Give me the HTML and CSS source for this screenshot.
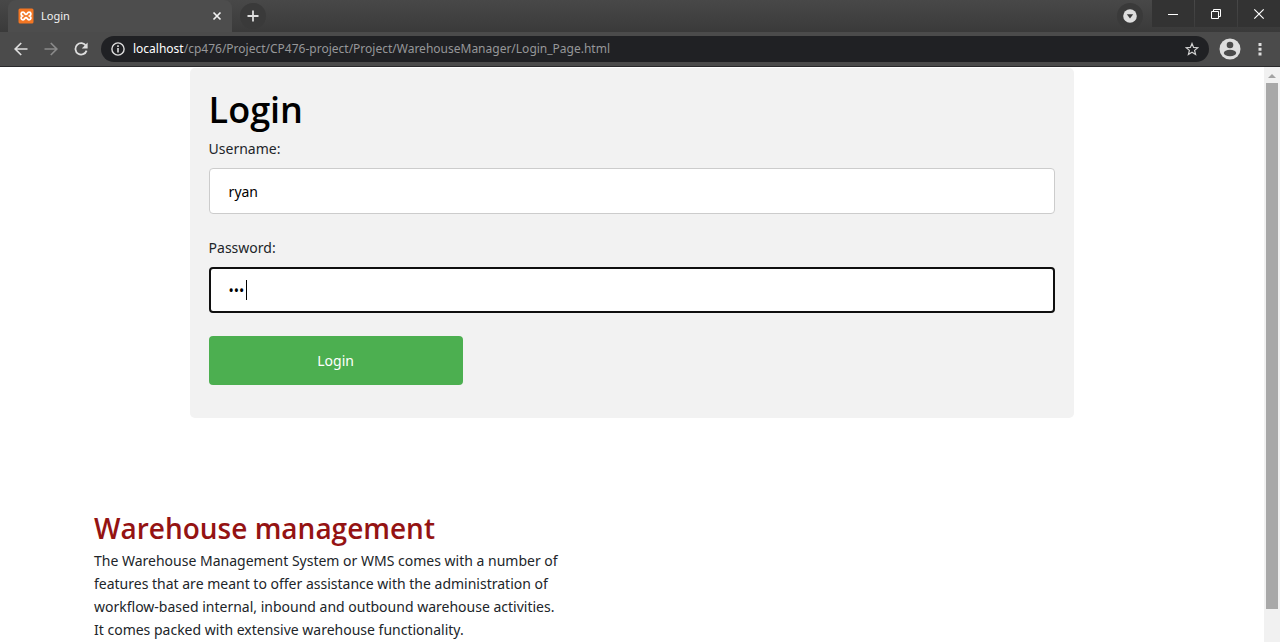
FILE: index.html
```html
<!DOCTYPE html>
<html lang="en">
<head>
<meta charset="utf-8">
<title>Login</title>
<link rel="stylesheet" href="styles.css">
</head>
<body>
<div class="browser">
  <header class="chrome">
    <div class="tabstrip">
      <div class="tab">
        <svg class="favicon" viewBox="0 0 16 16" width="16" height="16"><rect x=".5" y=".5" width="15" height="15" rx="1.5" fill="#f37623"/><path d="M5 4.2C2.6 4.2 2.6 7 4.4 8C2.6 9 2.6 11.8 5 11.8C6.9 11.8 6.6 9.6 8 9.6S9.1 11.8 11 11.8C13.4 11.8 13.4 9 11.6 8C13.4 7 13.4 4.2 11 4.2C9.1 4.2 9.4 6.4 8 6.4S6.9 4.2 5 4.2Z" fill="none" stroke="#fff" stroke-width="1.8"/></svg>
        <span class="tab-title">Login</span>
        <button class="icon-btn tab-close" aria-label="Close tab"><svg viewBox="0 0 10 10" width="10" height="10"><path d="M1.5 1.5l7 7M8.5 1.5l-7 7" stroke="#f1f1f1" stroke-width="1.7"/></svg></button>
      </div>
      <button class="icon-btn round" aria-label="New tab"><svg viewBox="0 0 12 12" width="12" height="12"><path d="M6 .5v11M.5 6h11" stroke="#dedede" stroke-width="1.8"/></svg></button>
      <div class="spacer"></div>
      <button class="icon-btn round search-tabs" aria-label="Search tabs"><svg viewBox="0 0 14 14" width="14" height="14"><circle cx="7" cy="7" r="6.8" fill="#dedede"/><path d="M3.8 5.2h6.4L7 9.4z" fill="#3a3a3a"/></svg></button>
      <button class="icon-btn win" aria-label="Minimize"><svg viewBox="0 0 12 12" width="12" height="12"><path d="M1 6.5h10" stroke="#fff"/></svg></button>
      <button class="icon-btn win" aria-label="Restore"><svg viewBox="0 0 12 12" width="12" height="12"><path d="M1.5 3.5h7v7h-7zM3.5 3.5v-2h7v7h-2" fill="none" stroke="#fff"/></svg></button>
      <button class="icon-btn win" aria-label="Close"><svg viewBox="0 0 12 12" width="12" height="12"><path d="M1.3 1.3l9.4 9.4M10.7 1.3l-9.4 9.4" stroke="#fff" stroke-width="1.2"/></svg></button>
    </div>
    <div class="toolbar">
      <button class="icon-btn nav" aria-label="Back"><svg viewBox="0 0 14 14" width="14" height="14"><path d="M13.5 7H1.5M7.2 1L1.2 7l6 6" fill="none" stroke="#dedede" stroke-width="1.7"/></svg></button>
      <button class="icon-btn nav" aria-label="Forward"><svg viewBox="0 0 14 14" width="14" height="14"><path d="M.5 7h12M6.8 1l6 6-6 6" fill="none" stroke="#8a8a8a" stroke-width="1.7"/></svg></button>
      <button class="icon-btn nav" aria-label="Reload"><svg viewBox="0 0 14 14" width="14" height="14"><path d="M12 3.8A5.7 5.7 0 1 0 12.6 8.6" fill="none" stroke="#dedede" stroke-width="1.8"/><path d="M13.6.6v6H7.8z" fill="#dedede"/></svg></button>
      <div class="omnibox">
        <svg viewBox="0 0 14 14" width="14" height="14"><circle cx="7" cy="7" r="6.1" fill="none" stroke="#dedede" stroke-width="1.4"/><path d="M7 6v4.6M7 3.3v1.6" stroke="#dedede" stroke-width="1.6"/></svg>
        <span class="url"><b>localhost</b>/cp476/Project/CP476-project/Project/WarehouseManager/Login_Page.html</span>
        <button class="icon-btn" aria-label="Bookmark"><svg viewBox="0 0 14 14" width="14" height="14"><path d="M7 1.5l1.6 3.9 4.2.3-3.2 2.7 1 4.1L7 10.3l-3.6 2.2 1-4.1L1.2 5.7l4.2-.3z" fill="none" stroke="#d0d0d0" stroke-width="1.2"/></svg></button>
      </div>
      <button class="icon-btn profile" aria-label="Profile"><svg viewBox="0 0 22 22" width="22" height="22"><circle cx="11" cy="11" r="10.5" fill="#dedede"/><circle cx="11" cy="7" r="3.3" fill="#4b4b4b"/><ellipse cx="11" cy="15" rx="6.2" ry="3.2" fill="#4b4b4b"/></svg></button>
      <button class="icon-btn menu" aria-label="Menu"><svg viewBox="0 0 4 14" width="4" height="14"><path d="M.5 1h3v3h-3zM.5 5.7h3v3h-3zM.5 10.4h3v3h-3z" fill="#dedede"/></svg></button>
    </div>
  </header>
  <div class="viewport">
    <main class="page">
      <form class="card">
        <h1>Login</h1>
        <label for="user">Username:</label>
        <input id="user" type="text" value="ryan">
        <label for="pass">Password:</label>
        <div class="field">
          <input class="active" id="pass" type="password" value="abc">
          <span class="caret"></span>
        </div>
        <button class="submit" type="button">Login</button>
      </form>
      <section class="about">
        <h2>Warehouse management</h2>
        <p>The Warehouse Management System or WMS comes with a number of features that are meant to offer assistance with the administration of workflow-based internal, inbound and outbound warehouse activities. It comes packed with extensive warehouse functionality.</p>
      </section>
    </main>
    <div class="scrollbar">
      <svg viewBox="0 0 8 4" width="8" height="4"><path d="M0 4l4-4 4 4z" fill="#a3a3a3"/></svg>
      <div class="thumb"></div>
    </div>
  </div>
</div>
</body>
</html>
```
FILE: styles.css
```css
* { box-sizing: border-box; }
body { margin: 0; background: #fff; color: #212529; font: 14px/22px "Noto Sans", "Open Sans", sans-serif; }
.browser { display: flex; flex-direction: column; height: 100vh; overflow: hidden; }

.icon-btn { display: flex; align-items: center; justify-content: center; flex: none; padding: 0; border: 0; background: none; }
.chrome { flex: none; background: #4b4b4b; border-bottom: 1px solid #29292b; font-size: 12px; }
.tabstrip { display: flex; height: 32px; background: linear-gradient(#484848, #3a3a3a); padding-left: 8px; }
.tab { display: flex; align-items: center; width: 224px; padding: 0 10px; background: #4d4d4d; border-radius: 8px 8px 0 0; color: #f1f1f1; font-size: 11px; }
.tab-title { flex: 1; margin-left: 7px; }
.round { width: 26px; height: 26px; margin: 3px 0 0 8px; border-radius: 50%; background: #3a3a3a; }
.spacer { flex: 1; }
.search-tabs { margin-right: 8px; }
.win { width: 42px; height: 27px; margin-left: 1px; background: #333; }
.toolbar { display: flex; align-items: center; height: 34px; padding: 0 10px 0 8px; }
.nav { width: 26px; height: 26px; margin-right: 4px; }
.omnibox { flex: 1; display: flex; align-items: center; height: 26px; margin-left: 3px; padding: 0 10px; border-radius: 13px; background: #202124; }
.url { flex: 1; margin-left: 8px; color: #969799; }
.url b { font-weight: 400; color: #fff; }
.profile { margin-left: 10px; }
.menu { width: 20px; margin-left: 9px; }

.viewport { flex: 1; display: flex; min-height: 0; }
.page { flex: 1; padding-top: 1px; overflow: hidden; }
.card { width: 70%; margin: 0 auto; padding: 19px 19px 33px; border-radius: 5px; background: #f2f2f2; }
h1, h2 { font-family: "Open Sans", "Noto Sans", sans-serif; font-weight: 600; }
h1 { margin: 0 0 5px; color: #000; font-size: 36px; line-height: 46px; }
label { display: block; margin-bottom: 8px; }
input { display: block; width: 100%; height: 46px; margin-bottom: 23px; padding: 0 19px; border: 1px solid #ccc; border-radius: 4px; background: #fff; color: #000; font: inherit; outline: 0; }
.field { position: relative; }
input.active { border: 2px solid #101010; padding: 0 18px; }
.caret { position: absolute; left: 37px; top: 13px; width: 1px; height: 20px; background: #000; }
.submit { display: block; width: 30%; height: 49px; border: 0; border-radius: 4px; background: #4caf50; color: #fff; font: inherit; }
.about { width: 470px; margin: 92px 0 0 94px; }
h2 { margin: 0 0 3px; color: #941313; font-size: 28px; line-height: 36px; white-space: nowrap; }
p { margin: 0; line-height: 23px; }

.scrollbar { display: flex; flex-direction: column; align-items: center; width: 16px; padding: 7px 2px 33px; background: #f1f1f1; }
.scrollbar svg { flex: none; margin-bottom: 5px; }
.thumb { flex: 1; width: 100%; background: #a8a8a8; }
```
